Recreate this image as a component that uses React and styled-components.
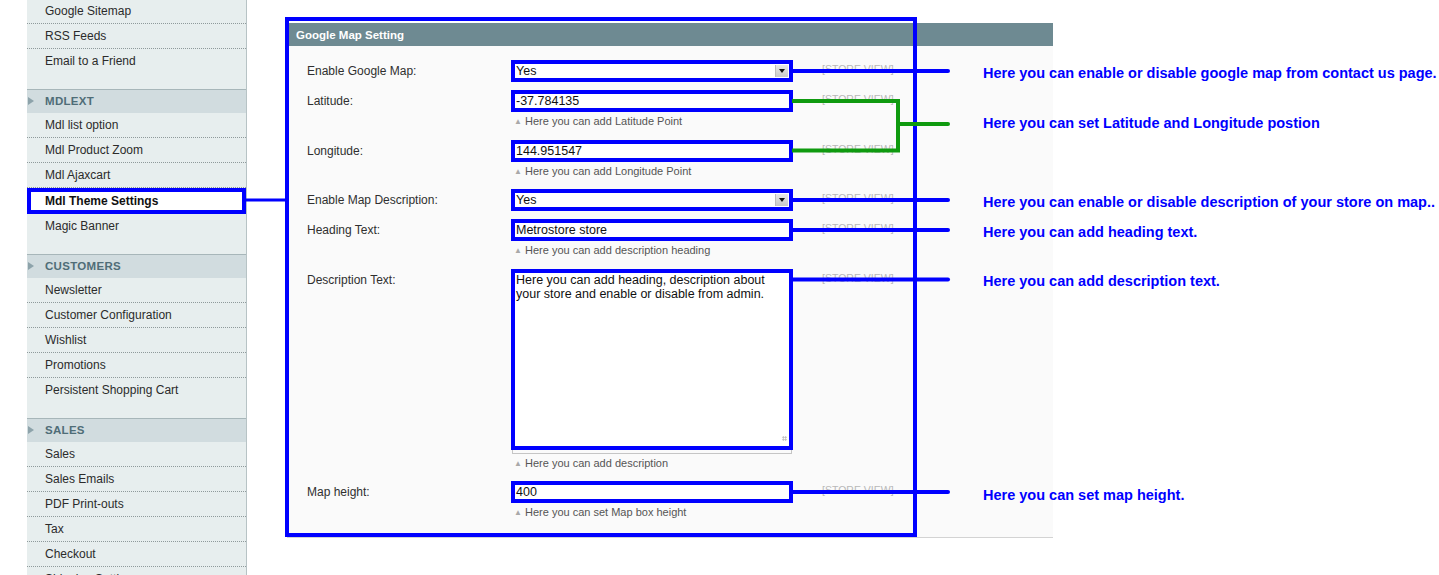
import React from "react";
import styled, { createGlobalStyle } from "styled-components";

// ─── global ───

const GlobalStyle = createGlobalStyle`
  html, body { margin: 0; padding: 0; background: #fff; overflow: hidden; }
  body { font-family: "Liberation Sans", Arial, sans-serif; }
  * { box-sizing: border-box; }
`;

const Page = styled.div`
  position: relative;
  width: 1439px;
  height: 575px;
  display: flex;
  align-items: flex-start;
  overflow: hidden;
`;

// ─── sidebar ───

const Sidebar = styled.nav`
  margin-left: 27px;
  margin-top: -1px;
  width: 220px;
  flex-shrink: 0;
  min-height: 640px;
  background: #e7eeee;
  border-right: 1px solid #b7c3c5;
`;

const Group = styled.div`
  padding-bottom: 16px;
`;

const GroupHeader = styled.div`
  position: relative;
  height: 24px;
  line-height: 23px;
  padding-left: 18px;
  border-top: 1px solid #a7b6b9;
  background: #d1dcdf;
  color: #4f6d77;
  font-size: 11.5px;
  font-weight: bold;
  letter-spacing: 0.3px;
  &::before {
    content: "";
    position: absolute;
    left: 1px;
    top: 7px;
    border-left: 6px solid #8da3aa;
    border-top: 4.5px solid transparent;
    border-bottom: 4.5px solid transparent;
  }
`;

const Item = styled.div`
  height: ${({ $last }) => ($last ? "24px" : "25px")};
  line-height: 24px;
  padding-left: 18px;
  font-size: 12px;
  color: #2b2b2b;
  white-space: nowrap;
  border-bottom: ${({ $last }) => ($last ? "none" : "1px dotted #8f9a9b")};
`;

const ActiveItem = styled.div`
  height: 26px;
  line-height: 18px;
  padding-left: 14px;
  font-size: 12px;
  font-weight: bold;
  color: #111;
  background: #fff;
  border: 4px solid #0000ff;
`;

// ─── config panel ───

const Main = styled.section`
  margin-left: 40px;
  margin-top: 23px;
  width: 766px;
  flex-shrink: 0;
`;

const PanelHeader = styled.div`
  height: 23px;
  line-height: 24px;
  padding-left: 9px;
  background: #6e8a92;
  color: #fff;
  font-size: 11.5px;
  font-weight: bold;
`;

const PanelBody = styled.div`
  background: #fafafa;
  padding: 10px 0 10px 20px;
  border-bottom: 1px solid #d3d3d3;
`;

const Row = styled.div`
  display: grid;
  grid-template-columns: 204px 282px 1fr;
  padding: 4px 0;
`;

const Label = styled.div`
  font-size: 12px;
  line-height: 22px;
  color: #2f2f2f;
`;

const Scope = styled.div`
  padding-left: 29px;
  font-size: 10.5px;
  line-height: 19px;
  color: #b8b8b8;
  white-space: nowrap;
`;

const Field = styled.div`
  position: relative;
  height: 22px;
  padding: 0 1px;
  border: 4px solid #0000ff;
  background: #fff;
  font-size: 12.5px;
  line-height: 14px;
  color: #111;
  white-space: nowrap;
`;

const ArrowBox = styled.span`
  position: absolute;
  right: 1px;
  top: 1px;
  width: 13px;
  height: 12px;
  background: linear-gradient(#e8e8e8, #c9c9c9);
  border-left: 1px solid #bdbdbd;
  &::after {
    content: "";
    position: absolute;
    left: 3px;
    top: 4px;
    border-top: 4px solid #111;
    border-left: 3.5px solid transparent;
    border-right: 3.5px solid transparent;
  }
`;

const TextArea = styled.textarea`
  display: block;
  width: 282px;
  height: 181px;
  margin: 0;
  padding: 0 1px;
  border: 4px solid #0000ff;
  background: #fff;
  font-family: "Liberation Sans", Arial, sans-serif;
  font-size: 12.5px;
  line-height: 14px;
  color: #111;
  resize: none;
  outline: none;
  overflow: hidden;
`;

const AreaWrap = styled.div`
  position: relative;
  &::after {
    content: "";
    position: absolute;
    right: 6px;
    bottom: 9px;
    width: 5px;
    height: 5px;
    background: radial-gradient(circle, #b5b5b5 0.8px, transparent 1px) 0 0 / 2.5px 2.5px;
  }
`;

const FrameEdge = styled.div`
  width: 280px;
  height: 4px;
  margin-left: 1px;
  border: 1px solid #c5c5c5;
  border-top: none;
`;

const Note = styled.div`
  height: 19.5px;
  line-height: 19.5px;
  font-size: 11px;
  color: #555;
  white-space: nowrap;
`;

const Caret = styled.span`
  display: inline-block;
  width: 14px;
  padding-left: 3px;
  font-size: 8px;
  color: #a9a9a9;
  vertical-align: 1px;
`;

// ─── annotations ───

const Overlay = styled.svg`
  position: absolute;
  left: 0;
  top: 0;
  pointer-events: none;
`;

const Callout = styled.div`
  position: absolute;
  left: 983px;
  top: ${({ $top }) => $top}px;
  line-height: 18px;
  font-size: 14.5px;
  font-weight: bold;
  color: #0000ff;
  white-space: nowrap;
`;

// ─── data ───

const groups = [
  { title: null, items: ["Google Sitemap", "RSS Feeds", "Email to a Friend"] },
  {
    title: "MDLEXT",
    items: ["Mdl list option", "Mdl Product Zoom", "Mdl Ajaxcart", "*Mdl Theme Settings", "Magic Banner"],
  },
  {
    title: "CUSTOMERS",
    items: ["Newsletter", "Customer Configuration", "Wishlist", "Promotions", "Persistent Shopping Cart"],
  },
  {
    title: "SALES",
    items: ["Sales", "Sales Emails", "PDF Print-outs", "Tax", "Checkout", "Shipping Settings"],
  },
];

const callouts = [
  { top: 64, text: "Here you can enable or disable google map from contact us page." },
  { top: 114, text: "Here you can set Latitude and Longitude postion" },
  { top: 193, text: "Here you can enable or disable description of your store on map.." },
  { top: 223, text: "Here you can add heading text." },
  { top: 272, text: "Here you can add description text." },
  { top: 486, text: "Here you can set map height." },
];

const blueLines = [71, 200, 230, 279.5, 492];

const NoteLine = ({ children }) => (
  <Note>
    <Caret>▲</Caret>
    {children}
  </Note>
);

// ─── component ───

const App = () => (
  <>
    <GlobalStyle />
    <Page>
      <Sidebar>
        {groups.map((g, gi) => (
          <Group key={gi}>
            {g.title && <GroupHeader>{g.title}</GroupHeader>}
            {g.items.map((it, i) =>
              it.startsWith("*") ? (
                <ActiveItem key={it}>{it.slice(1)}</ActiveItem>
              ) : (
                <Item key={it} $last={i === g.items.length - 1}>
                  {it}
                </Item>
              )
            )}
          </Group>
        ))}
      </Sidebar>

      <Main>
        <PanelHeader>Google Map Setting</PanelHeader>
        <PanelBody>
          <Row>
            <Label>Enable Google Map:</Label>
            <div>
              <Field>Yes<ArrowBox /></Field>
            </div>
            <Scope>[STORE VIEW]</Scope>
          </Row>
          <Row>
            <Label>Latitude:</Label>
            <div>
              <Field>-37.784135</Field>
              <NoteLine>Here you can add Latitude Point</NoteLine>
            </div>
            <Scope>[STORE VIEW]</Scope>
          </Row>
          <Row>
            <Label>Longitude:</Label>
            <div>
              <Field>144.951547</Field>
              <NoteLine>Here you can add Longitude Point</NoteLine>
            </div>
            <Scope>[STORE VIEW]</Scope>
          </Row>
          <Row>
            <Label>Enable Map Description:</Label>
            <div>
              <Field>Yes<ArrowBox /></Field>
            </div>
            <Scope>[STORE VIEW]</Scope>
          </Row>
          <Row>
            <Label>Heading Text:</Label>
            <div>
              <Field>Metrostore store</Field>
              <NoteLine>Here you can add description heading</NoteLine>
            </div>
            <Scope>[STORE VIEW]</Scope>
          </Row>
          <Row>
            <Label>Description Text:</Label>
            <div>
              <AreaWrap>
                <TextArea
                  readOnly
                  value={"Here you can add heading, description about your store and enable or disable from admin."}
                />
              </AreaWrap>
              <FrameEdge />
              <NoteLine>Here you can add description</NoteLine>
            </div>
            <Scope>[STORE VIEW]</Scope>
          </Row>
          <Row>
            <Label>Map height:</Label>
            <div>
              <Field>400</Field>
              <NoteLine>Here you can set Map box height</NoteLine>
            </div>
            <Scope>[STORE VIEW]</Scope>
          </Row>
        </PanelBody>
      </Main>

      <Overlay width="1439" height="575" viewBox="0 0 1439 575">
        <rect x="287" y="19" width="628" height="516" fill="none" stroke="#0000ff" strokeWidth="4" />
        <line x1="246" y1="200" x2="287" y2="200" stroke="#0000ff" strokeWidth="3" />
        {blueLines.map((y) => (
          <line key={y} x1="792" y1={y} x2="948" y2={y} stroke="#0000ff" strokeWidth="4" strokeLinecap="round" />
        ))}
        <path d="M792 101 H898 V150.5 H792" fill="none" stroke="#0f9a0f" strokeWidth="4" />
        <line x1="898" y1="124" x2="948" y2="124" stroke="#0f9a0f" strokeWidth="4" strokeLinecap="round" />
      </Overlay>

      {callouts.map((c) => (
        <Callout key={c.top} $top={c.top}>{c.text}</Callout>
      ))}
    </Page>
  </>
);

export default App;
